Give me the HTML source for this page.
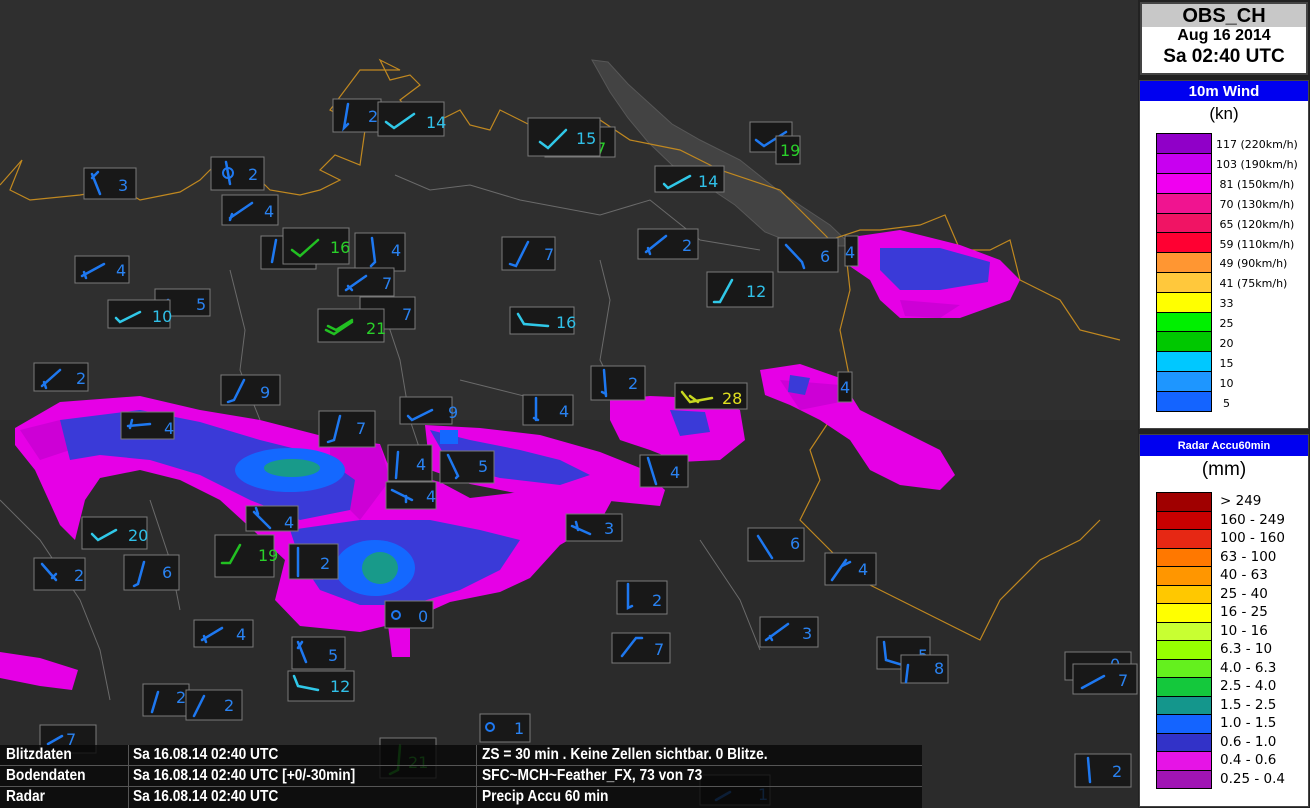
<!DOCTYPE html>
<html><head><meta charset="utf-8"><style>
html,body{margin:0;padding:0;background:#303030;}
body{width:1310px;height:808px;overflow:hidden;position:relative;font-family:"Liberation Sans","DejaVu Sans",sans-serif;}
svg{position:absolute;left:0;top:0}
.b rect{fill:#181818;stroke:#7a7a7a;stroke-width:1}
.b path{fill:none;stroke:#1e78f0;stroke-width:2.5;stroke-linecap:round}
.b text{fill:#2a82f0;font-size:16px;font-family:"DejaVu Sans",sans-serif}
.g text{fill:#2ad02a}.c text{fill:#30c0e8}.y text{fill:#e0e020}
.g path{stroke:#22c022}.c path{stroke:#30c8e8}.y path{stroke:#c8d820}
.panel{position:absolute;background:#fff;border:2px solid #444;box-sizing:border-box}
.info{position:absolute;left:0;top:745px;width:922px;height:63px;background:rgba(8,8,8,.8);}
.info div{position:absolute;color:#fff;font-weight:bold;font-size:16px;white-space:nowrap;transform-origin:0 0;transform:scaleX(.86)}
</style></head><body>
<svg width="1310" height="808" viewBox="0 0 1310 808">
<rect width="1310" height="808" fill="#2f2f2f"/>
<rect x="0" y="420" width="1138" height="388" fill="#2b2b2b"/>
<!-- lake -->
<path d="M592,60 L608,62 L628,84 L650,104 L672,124 L700,140 L740,160 L780,192 L830,225 L852,246 L800,246 L765,232 L735,205 L705,185 L672,165 L648,142 L628,118 L610,92 Z" fill="#434343" stroke="#575757"/>
<!-- borders -->
<g fill="none" stroke="#c08820" stroke-width="1.2">
<path d="M0,185 L22,160 L10,190 L30,200 L80,195 L120,188 L140,200 L180,192 L200,180 L215,165 L245,160 L255,175 L270,190 L300,195 L320,190 L340,180 L320,170 L335,155 L360,165 L365,130 L350,120 L330,110 L345,90 L360,70 L400,70 L380,60 L390,80 L410,75 L420,85 L400,100 L420,120 L440,120 L460,110 L470,125 L490,130 L500,110 L530,125 L560,140 L600,120 L630,140 L680,150 L720,170 L780,190 L800,210 L830,240 L860,230 L880,230 L920,225 L945,215 L960,250 L990,250 L1010,240 L1020,280 L1060,300 L1080,330 L1120,340"/>
<path d="M845,245 L850,290 L840,330 L850,380 L830,420 L810,450 L820,480 L800,520 L820,540 L860,580 L900,600 L940,620 L980,640 L1000,600 L1040,560 L1080,540 L1100,520"/>
</g>
<g fill="none" stroke="#6a6a6a" stroke-width="1">
<path d="M395,175 L430,190 L470,185 L520,200 L600,215 L650,200 L700,240 L760,250"/>
<path d="M230,270 L245,330 L240,370 L260,420"/>
<path d="M380,300 L400,360 L410,420 L420,450"/>
<path d="M600,260 L610,300 L600,360 L620,400"/>
<path d="M0,500 L40,540 L80,600 L100,650 L110,700"/>
<path d="M150,500 L170,560 L180,610"/>
<path d="M460,380 L500,390 L540,400"/>
<path d="M700,540 L740,600 L760,650"/>
</g>
<!-- radar -->
<g fill="#e600e6">
<path d="M15,428 L60,402 L140,396 L200,410 L260,420 L330,438 L380,444 L390,470 L440,482 L470,498 L520,492 L580,498 L612,500 L600,522 L560,545 L530,578 L500,592 L450,602 L410,620 L360,632 L300,626 L275,600 L285,560 L255,532 L220,500 L180,480 L140,470 L100,478 L85,500 L75,540 L60,525 L35,470 L15,445 Z"/>
<path d="M425,425 L480,428 L540,435 L600,452 L640,468 L665,490 L660,506 L600,500 L520,494 L470,484 L430,470 Z"/>
<path d="M610,400 L650,396 L700,398 L740,410 L745,440 L720,460 L680,462 L650,450 L620,440 L610,420 Z"/>
<path d="M760,370 L800,364 L840,378 L860,410 L900,430 L940,450 L955,475 L940,490 L900,485 L870,470 L850,440 L820,420 L790,405 L765,395 Z"/>
<path d="M845,238 L900,230 L960,245 L1000,260 L1020,280 L1010,300 L960,318 L900,318 L880,300 L870,280 L848,265 Z"/>
<path d="M0,652 L40,658 L78,670 L72,690 L40,686 L0,678 Z"/>
<path d="M388,625 L410,625 L410,657 L392,657 Z"/>
</g>
<g fill="#b800c8" opacity=".55">
<path d="M330,440 L380,445 L390,480 L360,520 L330,490 Z"/>
<path d="M780,380 L840,385 L850,400 L800,410 Z"/>
<path d="M20,430 L60,420 L70,450 L40,460 Z"/>
<path d="M900,300 L960,305 L940,318 L905,316 Z"/>
</g>
<g fill="#3a3ad8">
<path d="M60,420 L140,410 L200,422 L260,440 L320,455 L355,480 L350,510 L300,520 L250,500 L200,475 L150,460 L100,455 L70,460 L65,440 Z"/>
<path d="M290,530 L360,520 L430,520 L480,530 L520,540 L500,570 L460,590 L410,605 L360,605 L320,590 L300,560 Z"/>
<path d="M430,430 L470,440 L520,450 L560,460 L590,475 L560,485 L500,478 L450,465 Z"/>
<path d="M670,410 L705,412 L710,432 L680,436 Z"/>
<path d="M790,375 L810,378 L805,395 L788,392 Z"/>
<path d="M880,248 L940,248 L990,262 L988,282 L940,290 L900,290 L880,270 Z"/>
</g>
<g fill="#1468ff">
<ellipse cx="290" cy="470" rx="55" ry="22"/>
<ellipse cx="375" cy="568" rx="40" ry="28"/>
<rect x="440" y="430" width="18" height="14"/>
</g>
<g fill="#189a8a">
<ellipse cx="292" cy="468" rx="28" ry="9"/>
<ellipse cx="380" cy="568" rx="18" ry="16"/>
</g>
<!-- stations -->
<g class="b"><rect x="333" y="99" width="48" height="33"/><path d="M348,104 L344,128 L348,124"/><text x="368" y="122">2</text></g>
<g class="b c"><rect x="378" y="102" width="66" height="34"/><path d="M386,122 L394,128 L414,114"/><text x="426" y="128">14</text></g>
<g class="b g"><rect x="545" y="127" width="70" height="30"/><text x="596" y="154">7</text></g>
<g class="b c"><rect x="528" y="118" width="72" height="38"/><path d="M540,142 L548,148 L566,130"/><text x="576" y="144">15</text></g>
<g class="b"><rect x="750" y="122" width="42" height="30"/><path d="M756,140 L764,146 L786,132"/></g>
<g class="b g"><rect x="776" y="136" width="24" height="28"/><text x="780" y="156">19</text></g>
<g class="b"><rect x="84" y="168" width="52" height="31"/><path d="M92,174 L100,194 M92,178 L98,172"/><text x="118" y="191">3</text></g>
<g class="b"><rect x="211" y="157" width="53" height="33"/><circle cx="228" cy="173" r="5" fill="none" stroke="#1e78f0" stroke-width="2"/><path d="M226,162 L230,184"/><text x="248" y="180">2</text></g>
<g class="b"><rect x="222" y="195" width="56" height="30"/><path d="M230,218 L252,203 M232,214 L230,220"/><text x="264" y="217">4</text></g>
<g class="b c"><rect x="655" y="166" width="69" height="26"/><path d="M664,184 L668,188 L690,176"/><text x="698" y="187">14</text></g>
<g class="b"><rect x="261" y="236" width="55" height="33"/><path d="M272,262 L276,240"/></g>
<g class="b"><rect x="355" y="233" width="50" height="38"/><path d="M372,238 L375,262 L371,266"/><text x="391" y="256">4</text></g>
<g class="b g"><rect x="283" y="228" width="66" height="36"/><path d="M292,250 L300,256 L318,240"/><text x="330" y="253">16</text></g>
<g class="b"><rect x="502" y="237" width="53" height="33"/><path d="M510,264 L516,266 L528,242"/><text x="544" y="260">7</text></g>
<g class="b"><rect x="638" y="229" width="60" height="30"/><path d="M646,252 L666,236 M648,248 L650,254"/><text x="682" y="251">2</text></g>
<g class="b"><rect x="75" y="256" width="54" height="27"/><path d="M82,276 L104,264 M84,272 L86,278"/><text x="116" y="276">4</text></g>
<g class="b"><rect x="338" y="268" width="56" height="28"/><path d="M346,290 L366,276 M348,286 L352,290"/><text x="382" y="289">7</text></g>
<g class="b"><rect x="778" y="238" width="60" height="34"/><path d="M786,245 L802,262 L804,268"/><text x="820" y="262">6</text></g>
<g class="b"><rect x="845" y="236" width="13" height="30"/><text x="845" y="258">4</text></g>
<g class="b"><rect x="155" y="289" width="55" height="27"/><path d="M160,306 L168,300"/><text x="196" y="310">5</text></g>
<g class="b c"><rect x="108" y="300" width="62" height="28"/><path d="M116,318 L120,322 L140,312"/><text x="152" y="322">10</text></g>
<g class="b c"><rect x="707" y="272" width="66" height="35"/><path d="M714,302 L720,302 L732,280"/><text x="746" y="297">12</text></g>
<g class="b"><rect x="360" y="297" width="55" height="32"/><text x="402" y="320">7</text></g>
<g class="b g"><rect x="318" y="309" width="66" height="33"/><path d="M326,330 L334,334 L352,322 M328,326 L336,330 L352,320"/><text x="366" y="334">21</text></g>
<g class="b c"><rect x="510" y="307" width="64" height="27"/><path d="M518,314 L524,324 L548,326"/><text x="556" y="328">16</text></g>
<g class="b"><rect x="34" y="363" width="54" height="28"/><path d="M42,386 L60,370 M44,382 L46,388"/><text x="76" y="384">2</text></g>
<g class="b"><rect x="221" y="375" width="59" height="30"/><path d="M228,402 L234,400 L244,380"/><text x="260" y="398">9</text></g>
<g class="b"><rect x="591" y="366" width="54" height="34"/><path d="M604,370 L606,396 M602,392 L606,394"/><text x="628" y="389">2</text></g>
<g class="b y"><rect x="675" y="383" width="72" height="26"/><path d="M682,392 L690,402 L712,398 M690,396 L698,402"/><text x="722" y="404">28</text></g>
<g class="b"><rect x="400" y="397" width="52" height="27"/><path d="M408,416 L412,420 L432,410"/><text x="448" y="418">9</text></g>
<g class="b"><rect x="523" y="395" width="50" height="30"/><path d="M536,398 L536,420 M534,418 L538,420"/><text x="559" y="417">4</text></g>
<g class="b"><rect x="838" y="372" width="14" height="30"/><text x="840" y="393">4</text></g>
<g class="b"><rect x="121" y="412" width="53" height="27"/><path d="M128,426 L150,424 M132,420 L130,428"/><text x="164" y="434">4</text></g>
<g class="b"><rect x="319" y="411" width="56" height="36"/><path d="M328,442 L334,440 L340,416"/><text x="356" y="434">7</text></g>
<g class="b"><rect x="388" y="445" width="44" height="36"/><path d="M398,452 L396,478"/><text x="416" y="470">4</text></g>
<g class="b"><rect x="440" y="451" width="54" height="32"/><path d="M448,455 L458,476 L456,478"/><text x="478" y="472">5</text></g>
<g class="b"><rect x="386" y="482" width="50" height="27"/><path d="M392,490 L412,500 M406,496 L406,502"/><text x="426" y="502">4</text></g>
<g class="b"><rect x="640" y="455" width="48" height="32"/><path d="M648,458 L656,484"/><text x="670" y="478">4</text></g>
<g class="b"><rect x="246" y="506" width="52" height="25"/><path d="M254,512 L270,528 M256,508 L258,514"/><text x="284" y="528">4</text></g>
<g class="b c"><rect x="82" y="517" width="65" height="32"/><path d="M92,534 L98,540 L116,530"/><text x="128" y="541">20</text></g>
<g class="b"><rect x="566" y="514" width="56" height="27"/><path d="M572,526 L590,534 M576,522 L578,530"/><text x="604" y="534">3</text></g>
<g class="b g"><rect x="215" y="535" width="59" height="42"/><path d="M222,563 L230,563 L240,545"/><text x="258" y="561">19</text></g>
<g class="b"><rect x="289" y="544" width="49" height="35"/><path d="M298,548 L298,576"/><text x="320" y="569">2</text></g>
<g class="b"><rect x="748" y="528" width="56" height="33"/><path d="M758,536 L772,558"/><text x="790" y="549">6</text></g>
<g class="b"><rect x="34" y="558" width="51" height="32"/><path d="M42,564 L56,580 M52,578 L56,574"/><text x="74" y="581">2</text></g>
<g class="b"><rect x="124" y="555" width="55" height="35"/><path d="M134,586 L138,584 L144,562"/><text x="162" y="578">6</text></g>
<g class="b"><rect x="825" y="553" width="51" height="32"/><path d="M832,580 L846,560 M842,566 L850,562"/><text x="858" y="575">4</text></g>
<g class="b"><rect x="385" y="601" width="48" height="27"/><circle cx="396" cy="615" r="4" fill="none" stroke="#1e78f0" stroke-width="2"/><text x="418" y="622">0</text></g>
<g class="b"><rect x="617" y="581" width="50" height="33"/><path d="M628,584 L628,608 L632,606"/><text x="652" y="606">2</text></g>
<g class="b"><rect x="194" y="620" width="59" height="27"/><path d="M202,640 L222,628 M204,636 L206,642"/><text x="236" y="640">4</text></g>
<g class="b"><rect x="760" y="617" width="58" height="30"/><path d="M766,640 L788,624 M770,636 L772,640"/><text x="802" y="639">3</text></g>
<g class="b"><rect x="612" y="633" width="58" height="30"/><path d="M622,656 L636,638 L642,638"/><text x="654" y="655">7</text></g>
<g class="b"><rect x="292" y="637" width="53" height="32"/><path d="M298,642 L306,662 M298,648 L302,642"/><text x="328" y="661">5</text></g>
<g class="b"><rect x="877" y="637" width="53" height="32"/><path d="M884,642 L886,660 L906,666"/><text x="918" y="661">5</text></g>
<g class="b"><rect x="901" y="655" width="47" height="28"/><path d="M908,665 L906,682"/><text x="934" y="674">8</text></g>
<g class="b c"><rect x="288" y="671" width="66" height="30"/><path d="M294,676 L298,686 L318,690"/><text x="330" y="692">12</text></g>
<g class="b"><rect x="143" y="684" width="46" height="32"/><path d="M152,712 L158,692"/><text x="176" y="703">2</text></g>
<g class="b"><rect x="186" y="690" width="56" height="30"/><path d="M194,716 L204,696"/><text x="224" y="711">2</text></g>
<g class="b"><rect x="1065" y="652" width="66" height="28"/><text x="1110" y="670">0</text></g>
<g class="b"><rect x="1073" y="664" width="64" height="30"/><path d="M1082,688 L1104,676"/><text x="1118" y="686">7</text></g>
<g class="b"><rect x="480" y="714" width="50" height="28"/><circle cx="490" cy="727" r="4" fill="none" stroke="#1e78f0" stroke-width="2"/><text x="514" y="734">1</text></g>
<g class="b"><rect x="40" y="725" width="56" height="28"/><path d="M48,744 L62,736"/><text x="66" y="745">7</text></g>
<g class="b g"><rect x="380" y="738" width="56" height="40"/><path d="M390,774 L398,770 L400,746"/><text x="408" y="768">21</text></g>
<g class="b"><rect x="1075" y="754" width="56" height="33"/><path d="M1088,758 L1090,782"/><text x="1112" y="777">2</text></g>
<g class="b"><rect x="700" y="775" width="70" height="30"/><path d="M716,800 L730,792"/><text x="758" y="800">1</text></g>
</svg>

<div class="info">
 <div style="left:6px;top:1px">Blitzdaten</div><div style="left:133px;top:1px">Sa 16.08.14 02:40 UTC</div><div style="left:482px;top:1px">ZS = 30 min . Keine Zellen sichtbar. 0 Blitze.</div>
 <div style="left:6px;top:22px">Bodendaten</div><div style="left:133px;top:22px">Sa 16.08.14 02:40 UTC [+0/-30min]</div><div style="left:482px;top:22px">SFC~MCH~Feather_FX, 73 von 73</div>
 <div style="left:6px;top:43px">Radar</div><div style="left:133px;top:43px">Sa 16.08.14 02:40 UTC</div><div style="left:482px;top:43px">Precip Accu 60 min</div>
 <span style="position:absolute;left:0;top:20px;width:922px;border-top:1px solid #555"></span>
 <span style="position:absolute;left:0;top:41px;width:922px;border-top:1px solid #555"></span>
 <span style="position:absolute;left:128px;top:0;height:63px;border-left:1px solid #555"></span>
 <span style="position:absolute;left:476px;top:0;height:63px;border-left:1px solid #555"></span>
</div>

<div style="position:absolute;left:1138px;top:0;width:172px;height:808px;background:#222"></div>
<div class="panel" style="left:1140px;top:2px;width:168px;height:73px;">
 <div style="height:23px;background:#c8c8c8;text-align:center;font-weight:bold;font-size:20px;line-height:24px;">OBS_CH</div>
 <div style="text-align:center;font-weight:bold;font-size:16px;line-height:18px;">Aug 16 2014</div>
 <div style="text-align:center;font-weight:bold;font-size:19px;line-height:24px;">Sa 02:40 UTC</div>
</div>
<div class="panel" style="left:1139px;top:80px;width:170px;height:349px;border-width:1px">
 <div style="height:20px;background:#0000f0;color:#fff;text-align:center;font-weight:bold;font-size:15px;line-height:21px;">10m Wind</div>
 <div style="text-align:center;font-size:17px;line-height:26px;">(kn)</div>
 <div style="position:absolute;left:16px;top:52px;width:54px;border:1px solid #000;">
  <div style="height:19px;background:#9000c8;border-bottom:1px solid #000"></div>
  <div style="height:19px;background:#c800f0;border-bottom:1px solid #000"></div>
  <div style="height:19px;background:#f000f0;border-bottom:1px solid #000"></div>
  <div style="height:19px;background:#f01490;border-bottom:1px solid #000"></div>
  <div style="height:18px;background:#f01464;border-bottom:1px solid #000"></div>
  <div style="height:19px;background:#ff0032;border-bottom:1px solid #000"></div>
  <div style="height:19px;background:#ff9632;border-bottom:1px solid #000"></div>
  <div style="height:19px;background:#ffc83c;border-bottom:1px solid #000"></div>
  <div style="height:19px;background:#ffff00;border-bottom:1px solid #000"></div>
  <div style="height:18px;background:#00f000;border-bottom:1px solid #000"></div>
  <div style="height:19px;background:#00c800;border-bottom:1px solid #000"></div>
  <div style="height:19px;background:#00c8ff;border-bottom:1px solid #000"></div>
  <div style="height:19px;background:#1e96ff;border-bottom:1px solid #000"></div>
  <div style="height:19px;background:#1464ff"></div>
 </div>
 <div style="position:absolute;left:76px;top:54px;font-family:'DejaVu Sans',sans-serif;font-size:11px;line-height:19.9px;white-space:nowrap">117 (220km/h)<br>103 (190km/h)<br>&nbsp;81 (150km/h)<br>&nbsp;70 (130km/h)<br>&nbsp;65 (120km/h)<br>&nbsp;59 (110km/h)<br>&nbsp;49 (90km/h)<br>&nbsp;41 (75km/h)<br>&nbsp;33<br>&nbsp;25<br>&nbsp;20<br>&nbsp;15<br>&nbsp;10<br>&nbsp;&nbsp;5</div>
</div>
<div class="panel" style="left:1139px;top:434px;width:170px;height:373px;border-width:1px">
 <div style="height:21px;background:#0000f0;color:#fff;text-align:center;font-weight:bold;font-size:11px;line-height:22px;">Radar Accu60min</div>
 <div style="text-align:center;font-size:19px;line-height:28px;">(mm)</div>
 <div style="position:absolute;left:16px;top:57px;width:54px;border:1px solid #000;">
  <div style="height:17.5px;background:#a00000;border-bottom:1px solid #000"></div>
  <div style="height:17.5px;background:#c80000;border-bottom:1px solid #000"></div>
  <div style="height:17.5px;background:#e62814;border-bottom:1px solid #000"></div>
  <div style="height:17.5px;background:#ff7800;border-bottom:1px solid #000"></div>
  <div style="height:17.5px;background:#ff9600;border-bottom:1px solid #000"></div>
  <div style="height:17.5px;background:#ffc800;border-bottom:1px solid #000"></div>
  <div style="height:17.5px;background:#ffff00;border-bottom:1px solid #000"></div>
  <div style="height:17.5px;background:#c8ff32;border-bottom:1px solid #000"></div>
  <div style="height:17.5px;background:#96ff00;border-bottom:1px solid #000"></div>
  <div style="height:17.5px;background:#64f01e;border-bottom:1px solid #000"></div>
  <div style="height:17.5px;background:#14c83c;border-bottom:1px solid #000"></div>
  <div style="height:17.5px;background:#14968c;border-bottom:1px solid #000"></div>
  <div style="height:17.5px;background:#1464ff;border-bottom:1px solid #000"></div>
  <div style="height:17.5px;background:#3232c8;border-bottom:1px solid #000"></div>
  <div style="height:17.5px;background:#e614e6;border-bottom:1px solid #000"></div>
  <div style="height:17.5px;background:#a014b4"></div>
 </div>
 <div style="position:absolute;left:80px;top:57px;font-family:'DejaVu Sans',sans-serif;font-size:13.5px;line-height:18.5px;white-space:nowrap">&gt; 249<br>160 - 249<br>100 - 160<br>63 - 100<br>40 - 63<br>25 - 40<br>16 - 25<br>10 - 16<br>6.3 - 10<br>4.0 - 6.3<br>2.5 - 4.0<br>1.5 - 2.5<br>1.0 - 1.5<br>0.6 - 1.0<br>0.4 - 0.6<br>0.25 - 0.4</div>
</div>
</body></html>
